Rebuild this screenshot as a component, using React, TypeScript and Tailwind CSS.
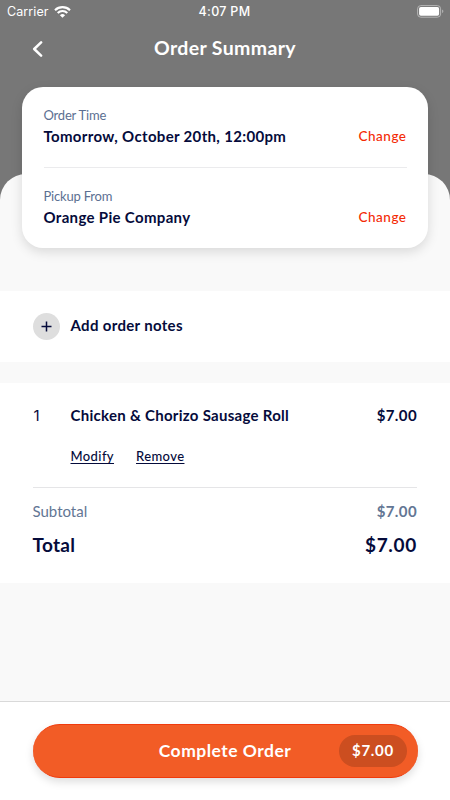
import type { ReactNode } from "react";

interface DetailRowProps {
  label: string;
  children: ReactNode;
}

const DetailRow = ({ label, children }: DetailRowProps) => (
  <div className="flex items-end justify-between">
    <div>
      <p className="text-[13px] leading-4 tracking-[-0.2px] text-[#5b6f92]">{label}</p>
      <p className="mt-[3px] whitespace-nowrap text-[15px] font-bold leading-5 tracking-[0.33px]">
        {children}
      </p>
    </div>
    <button className="text-[13.5px] font-medium leading-5 tracking-[0.5px] text-[#f42a05]">
      Change
    </button>
  </div>
);

const StatusBar = () => (
  <div className="grid h-[23px] grid-cols-3 items-center pl-[7px] pr-1.5 font-['Inter',sans-serif] text-[12.5px]">
    <div className="flex items-center gap-[5px]">
      <span className="mt-px tracking-[0.1px]">Carrier</span>
      <svg width="17" height="12" viewBox="0 0 17 12" fill="none" stroke="currentColor" strokeWidth="2.1">
        <path d="M1 4.2a10.8 10.8 0 0 1 15 0" />
        <path d="M3.7 7a6.9 6.9 0 0 1 9.6 0" />
        <path d="M8.5 11.8 5.9 9.2a3.8 3.8 0 0 1 5.2 0Z" fill="currentColor" stroke="none" />
      </svg>
    </div>
    <span className="-ml-0.5 mt-px text-center font-medium tracking-[0.3px]">4:07 PM</span>
    <svg className="justify-self-end" width="27" height="13" viewBox="0 0 27 13">
      <rect x=".6" y=".6" width="23" height="11.6" rx="3.2" fill="none" stroke="#b5b5b5" />
      <rect x="2.1" y="2.1" width="20" height="8.6" rx="1.7" fill="#fff" />
      <path d="M25.1 4.6c1.7.6 1.7 3 0 3.6Z" fill="#b5b5b5" />
    </svg>
  </div>
);

const App = () => {
  return (
    <div className="flex h-[800px] w-[450px] flex-col overflow-hidden bg-[#777] font-['Lato',sans-serif] text-[#050b3b]">
      <header className="h-[174px] shrink-0 text-white">
        <StatusBar />
        <div className="relative flex h-[50px] items-center justify-center">
          <button aria-label="Back" className="absolute left-8 top-[18px]">
            <svg width="11" height="16" viewBox="0 0 11 16" fill="none" stroke="currentColor" strokeWidth="2.5">
              <path d="M9.1 1.4 2.2 8l6.9 6.6" strokeLinecap="round" strokeLinejoin="round" />
            </svg>
          </button>
          <h1 className="text-[19.5px] font-bold leading-6 tracking-[0.35px]">Order Summary</h1>
        </div>
      </header>

      <main className="flex grow flex-col rounded-t-[26px] bg-[#f9f9f9]">
        <section className="-mt-[87px] mx-[22px] h-[161px] shrink-0 rounded-[21px] bg-white px-[21.5px] pt-5 shadow-[0_4px_12px_rgba(0,0,0,0.13)]">
          <DetailRow label="Order Time">Tomorrow, October 20th, 12:00pm</DetailRow>
          <hr className="mb-5 mt-[21px] border-[#ebebed]" />
          <DetailRow label="Pickup From">Orange Pie Company</DetailRow>
        </section>

        <section className="mt-[43px] flex h-[70.5px] shrink-0 items-center gap-[11px] bg-white px-[32.5px]">
          <button aria-label="Add" className="flex size-[27px] items-center justify-center rounded-full bg-[#dedede]">
            <svg width="11" height="11" viewBox="0 0 11 11" stroke="currentColor" strokeWidth="1.5">
              <path d="M5.5.5v10M.5 5.5h10" />
            </svg>
          </button>
          <p className="-mt-0.5 text-[15px] font-bold leading-5 tracking-[0.33px]">Add order notes</p>
        </section>

        <section className="mt-[21.5px] h-[200px] shrink-0 bg-white pl-[32.5px] pr-[33px] pt-[22px]">
          <div className="grid grid-cols-[38px_1fr_auto] text-[15px] leading-5">
            <span className="pl-px pt-px font-['Inter',sans-serif]">1</span>
            <span className="font-bold tracking-[0.28px]">Chicken &amp; Chorizo Sausage Roll</span>
            <span className="font-bold tracking-[0.4px]">$7.00</span>
          </div>
          <div className="ml-[38px] mt-5 flex gap-[22px] text-[13px] font-medium leading-5 tracking-[0.4px]">
            <button className="underline underline-offset-2">Modify</button>
            <button className="underline underline-offset-2">Remove</button>
          </div>
          <hr className="mt-[21px] border-[#e5e5e7]" />
          <div className="mt-[13px] flex justify-between text-[15px] leading-5 text-[#637694]">
            <span>Subtotal</span>
            <span className="font-bold tracking-[0.4px]">$7.00</span>
          </div>
          <div className="mt-3 flex justify-between text-[19px] font-bold leading-6">
            <span className="tracking-[0.3px]">Total</span>
            <span className="tracking-[0.7px]">$7.00</span>
          </div>
        </section>
      </main>

      <footer className="h-[99px] shrink-0 border-t border-[#d9d9d9] bg-white px-[32.5px] pt-[22px]">
        <button className="grid h-[54px] w-full grid-cols-[1fr_auto_1fr] items-center rounded-full border-y border-[#f03a0c] bg-[#f25c26] text-white shadow-[0_4px_9px_rgba(0,0,0,0.13)]">
          <span className="col-start-2 text-[17.5px] font-bold leading-6 tracking-[0.48px]">Complete Order</span>
          <span className="mr-[10.5px] flex h-8 w-[68px] items-center justify-center justify-self-end rounded-full bg-[#cc4e20] pb-0.5 text-[15px] font-bold tracking-[0.7px]">
            $7.00
          </span>
        </button>
      </footer>
    </div>
  );
};

export default App;
